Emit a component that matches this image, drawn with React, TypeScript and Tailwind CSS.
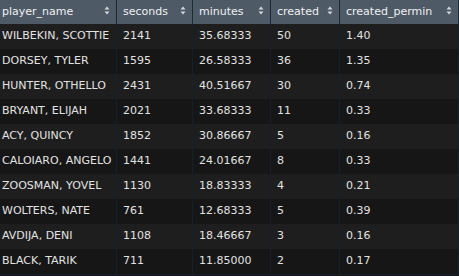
import React from 'react';

const rows: [string, string, string, string, string][] = [
  ['WILBEKIN, SCOTTIE', '2141', '35.68333', '50', '1.40'],
  ['DORSEY, TYLER', '1595', '26.58333', '36', '1.35'],
  ['HUNTER, OTHELLO', '2431', '40.51667', '30', '0.74'],
  ['BRYANT, ELIJAH', '2021', '33.68333', '11', '0.33'],
  ['ACY, QUINCY', '1852', '30.86667', '5', '0.16'],
  ['CALOIARO, ANGELO', '1441', '24.01667', '8', '0.33'],
  ['ZOOSMAN, YOVEL', '1130', '18.83333', '4', '0.21'],
  ['WOLTERS, NATE', '761', '12.68333', '5', '0.39'],
  ['AVDIJA, DENI', '1108', '18.46667', '3', '0.16'],
  ['BLACK, TARIK', '711', '11.85000', '2', '0.17'],
];

const cols = ['player_name', 'seconds', 'minutes', 'created', 'created_permin'];
const widths = ['w-[117px]', 'w-[76px]', 'w-[78px]', 'w-[69px]', 'w-[119px]'];

function SortIcon() {
  return (
    <svg width="6" height="9" viewBox="0 0 6 9" className="shrink-0 mb-[3px]">
      <path d="M3 0.5 L5.5 3.5 L0.5 3.5 Z" fill="#d2d8de" />
      <path d="M3 8.5 L5.5 5.5 L0.5 5.5 Z" fill="#d2d8de" />
    </svg>
  );
}

export default function App() {
  return (
    <div
      className="w-[459px] h-[276px] bg-[#151515] overflow-hidden text-[11px] text-[#e2e2e2] whitespace-nowrap"
      style={{ fontFamily: '"DejaVu Sans", sans-serif' }}
    >
      <div className="flex h-[24px] bg-[#4e5a66] text-[#eef0f2]">
        {cols.map((c, i) => (
          <div
            key={c}
            className={`${widths[i]} shrink-0 flex items-center justify-between pr-[6px] border-r border-[#1c2a38] ${i === 0 ? 'pl-[2px]' : 'pl-[6px]'}`}
          >
            <span>{c}</span>
            <SortIcon />
          </div>
        ))}
      </div>
      {rows.map((r, ri) => (
        <div
          key={r[0]}
          className={`flex h-[25px] ${ri % 2 === 0 ? 'bg-[#1e1e1e]' : 'bg-[#161616]'}`}
        >
          {r.map((v, i) => (
            <div
              key={i}
              className={`${widths[i]} shrink-0 flex items-center border-r border-[#14202c] ${i === 0 ? 'pl-[2px]' : 'pl-[6px]'}`}
            >
              {v}
            </div>
          ))}
        </div>
      ))}
      <div className="h-px bg-[#14202c]" />
    </div>
  );
}
